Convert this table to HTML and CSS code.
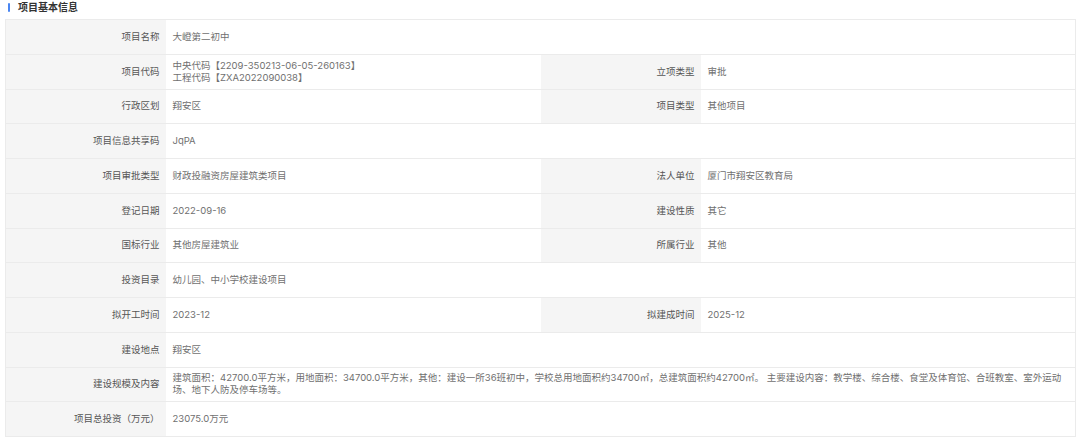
FILE: index.html
```html
<!DOCTYPE html>
<html lang="zh-CN">
<head>
  <meta charset="UTF-8" />
  <title>项目基本信息</title>
  <link rel="stylesheet" href="styles.css">
</head>
<body>
  <div class="section-title">项目基本信息</div>

  <table class="info-table">
    <colgroup>
      <col class="col-label">
      <col class="col-value">
      <col class="col-label">
      <col>
    </colgroup>
    <tr>
      <th>项目名称</th>
      <td colspan="3">大嶝第二初中</td>
    </tr>
    <tr>
      <th>项目代码</th>
      <td>中央代码【2209-350213-06-05-260163】<br>工程代码【ZXA2022090038】</td>
      <th>立项类型</th>
      <td>审批</td>
    </tr>
    <tr>
      <th>行政区划</th>
      <td>翔安区</td>
      <th>项目类型</th>
      <td>其他项目</td>
    </tr>
    <tr>
      <th>项目信息共享码</th>
      <td colspan="3">JqPA</td>
    </tr>
    <tr>
      <th>项目审批类型</th>
      <td>财政投融资房屋建筑类项目</td>
      <th>法人单位</th>
      <td>厦门市翔安区教育局</td>
    </tr>
    <tr>
      <th>登记日期</th>
      <td>2022-09-16</td>
      <th>建设性质</th>
      <td>其它</td>
    </tr>
    <tr>
      <th>国标行业</th>
      <td>其他房屋建筑业</td>
      <th>所属行业</th>
      <td>其他</td>
    </tr>
    <tr>
      <th>投资目录</th>
      <td colspan="3">幼儿园、中小学校建设项目</td>
    </tr>
    <tr>
      <th>拟开工时间</th>
      <td>2023-12</td>
      <th>拟建成时间</th>
      <td>2025-12</td>
    </tr>
    <tr>
      <th>建设地点</th>
      <td colspan="3">翔安区</td>
    </tr>
    <tr>
      <th>建设规模及内容</th>
      <td colspan="3">建筑面积：42700.0平方米，用地面积：34700.0平方米，其他：建设一所36班初中，学校总用地面积约34700㎡，总建筑面积约42700㎡。 主要建设内容：教学楼、综合楼、食堂及体育馆、合班教室、室外运动场、地下人防及停车场等。</td>
    </tr>
    <tr>
      <th>项目总投资（万元）</th>
      <td colspan="3">23075.0万元</td>
    </tr>
  </table>
</body>
</html>
```

FILE: styles.css
```css
body {
  margin: 0;
  padding: 0 4px 0 5px;
  background: #ffffff;
  font-family: Inter, "Noto Sans CJK SC", sans-serif;
  font-size: 9.5px;
  color: #707070;
}
.section-title {
  height: 19px;
  line-height: 15px;
  padding-left: 13px;
  position: relative;
  font-size: 10px;
  font-weight: bold;
  color: #333;
}
.section-title::before {
  content: "";
  position: absolute;
  left: 3px;
  top: 3px;
  width: 2px;
  height: 9px;
  background: #4a86f2;
  border-radius: 1px;
}
.info-table {
  width: 100%;
  border-collapse: collapse;
  table-layout: fixed;
  border: 1px solid #ebebeb;
}
.col-label {
  width: 160px;
}
.col-value {
  width: 375px;
}
.info-table tr {
  height: 34.75px;
}
.info-table th,
.info-table td {
  border-bottom: 1px solid #ebebeb;
  line-height: 12px;
  vertical-align: middle;
}
.info-table th {
  background: #f5f5f5;
  font-weight: normal;
  text-align: right;
  color: #555;
  padding: 0 6px 0 0;
}
.info-table td {
  text-align: left;
  padding: 0 6px 0 7px;
}
```
